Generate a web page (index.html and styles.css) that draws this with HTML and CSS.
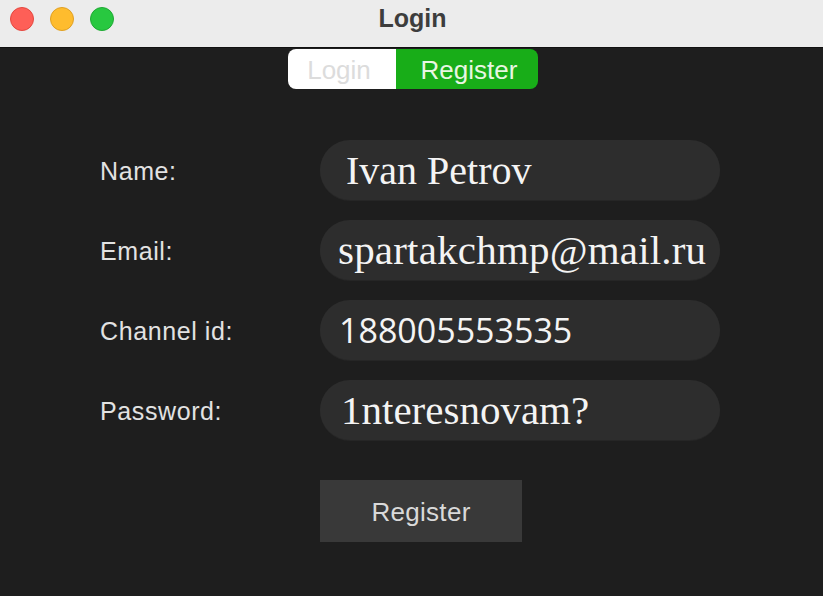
FILE: index.html
```html
<!DOCTYPE html>
<html>
<head>
<meta charset="utf-8">
<title>Login</title>
<link rel="stylesheet" href="styles.css">
</head>
<body>
<div class="window">
  <header class="titlebar">
    <div class="lights">
      <span class="light red"></span>
      <span class="light yellow"></span>
      <span class="light green"></span>
    </div>
    <div class="title">Login</div>
    <div></div>
  </header>
  <main class="content">
    <div class="segmented">
      <div class="seg seg-off">Login</div>
      <div class="seg seg-on">Register</div>
    </div>
    <form class="form">
      <label class="label">Name:</label>
      <div class="field serif field-name">Ivan Petrov</div>
      <label class="label">Email:</label>
      <div class="field serif field-email">spartakchmp@mail.ru</div>
      <label class="label">Channel id:</label>
      <div class="field sans field-id">188005553535</div>
      <label class="label">Password:</label>
      <div class="field serif field-pass">1nteresnovam?</div>
      <div></div>
      <div class="btn-row"><button type="button" class="btn">Register</button></div>
    </form>
  </main>
</div>
</body>
</html>
```
FILE: styles.css
```css
* { box-sizing: border-box; }
html, body {
  margin: 0;
  padding: 0;
  width: 823px;
  height: 596px;
  overflow: hidden;
  background: #1e1e1e;
  font-family: "Liberation Sans", Arial, sans-serif;
}
.window {
  display: flex;
  flex-direction: column;
  height: 596px;
}
.titlebar {
  height: 48px;
  background: #ececec;
  border-bottom: 1px solid #111;
  display: grid;
  grid-template-columns: 1fr auto 1fr;
  align-items: center;
}
.lights {
  display: flex;
  gap: 16px;
  padding-left: 10px;
  padding-bottom: 9px;
  align-items: center;
}
.light {
  width: 24px;
  height: 24px;
  border-radius: 50%;
  display: block;
}
.red { background: #fe5f57; border: 1px solid #e4483f; }
.yellow { background: #febc2e; border: 1px solid #e0a023; }
.green { background: #28c840; border: 1px solid #1fa934; }
.title {
  font-weight: bold;
  font-size: 25px;
  color: #3d3d3d;
  padding-bottom: 10px;
  padding-left: 2px;
}
.content {
  flex: 1;
  display: flex;
  flex-direction: column;
  align-items: center;
}
.segmented {
  margin-top: 1px;
  margin-left: 3px;
  display: flex;
  height: 40px;
  border-radius: 8px;
  overflow: hidden;
}
.seg {
  display: flex;
  align-items: center;
  justify-content: center;
  font-size: 26px;
  padding-top: 2px;
}
.seg-off {
  width: 108px;
  background: #ffffff;
  color: #dcdcdc;
  padding-right: 6px;
}
.seg-on {
  width: 142px;
  background: #18ad18;
  color: #e8f6e2;
  padding-left: 4px;
}
.form {
  margin-top: 51px;
  align-self: flex-start;
  margin-left: 100px;
  display: grid;
  grid-template-columns: 220px 400px;
  grid-auto-rows: 60px;
  row-gap: 20px;
  align-items: center;
}
.label {
  font-size: 25px;
  color: #e2e2e2;
  letter-spacing: 0.6px;
  padding-top: 2px;
}
.field {
  height: 60px;
  border-radius: 30px;
  background: #2d2d2d;
  box-shadow: 0 1px 0 #262626;
  color: #f4f4f4;
  display: flex;
  align-items: center;
  white-space: nowrap;
  overflow: hidden;
  padding-left: 18px;
}
.serif {
  font-family: "Liberation Serif", "Times New Roman", serif;
  font-size: 41px;
}
.sans {
  font-family: "Open Sans", "Liberation Sans", sans-serif;
  font-size: 34px;
}
.field-name { padding-left: 26px; font-size: 40px; }
.field-email { padding-left: 18px; letter-spacing: 0.2px; }
.field-id { padding-left: 19px; }
.field-pass { padding-left: 21px; }
.btn-row {
  height: 62px;
  margin-top: 42px;
  display: flex;
}
.btn {
  width: 202px;
  height: 62px;
  border: none;
  border-radius: 0;
  background: #393939;
  color: #d9d9d9;
  font-family: "Liberation Sans", Arial, sans-serif;
  font-size: 26px;
  letter-spacing: 0.3px;
  padding: 2px 0 0 0;
}
```
